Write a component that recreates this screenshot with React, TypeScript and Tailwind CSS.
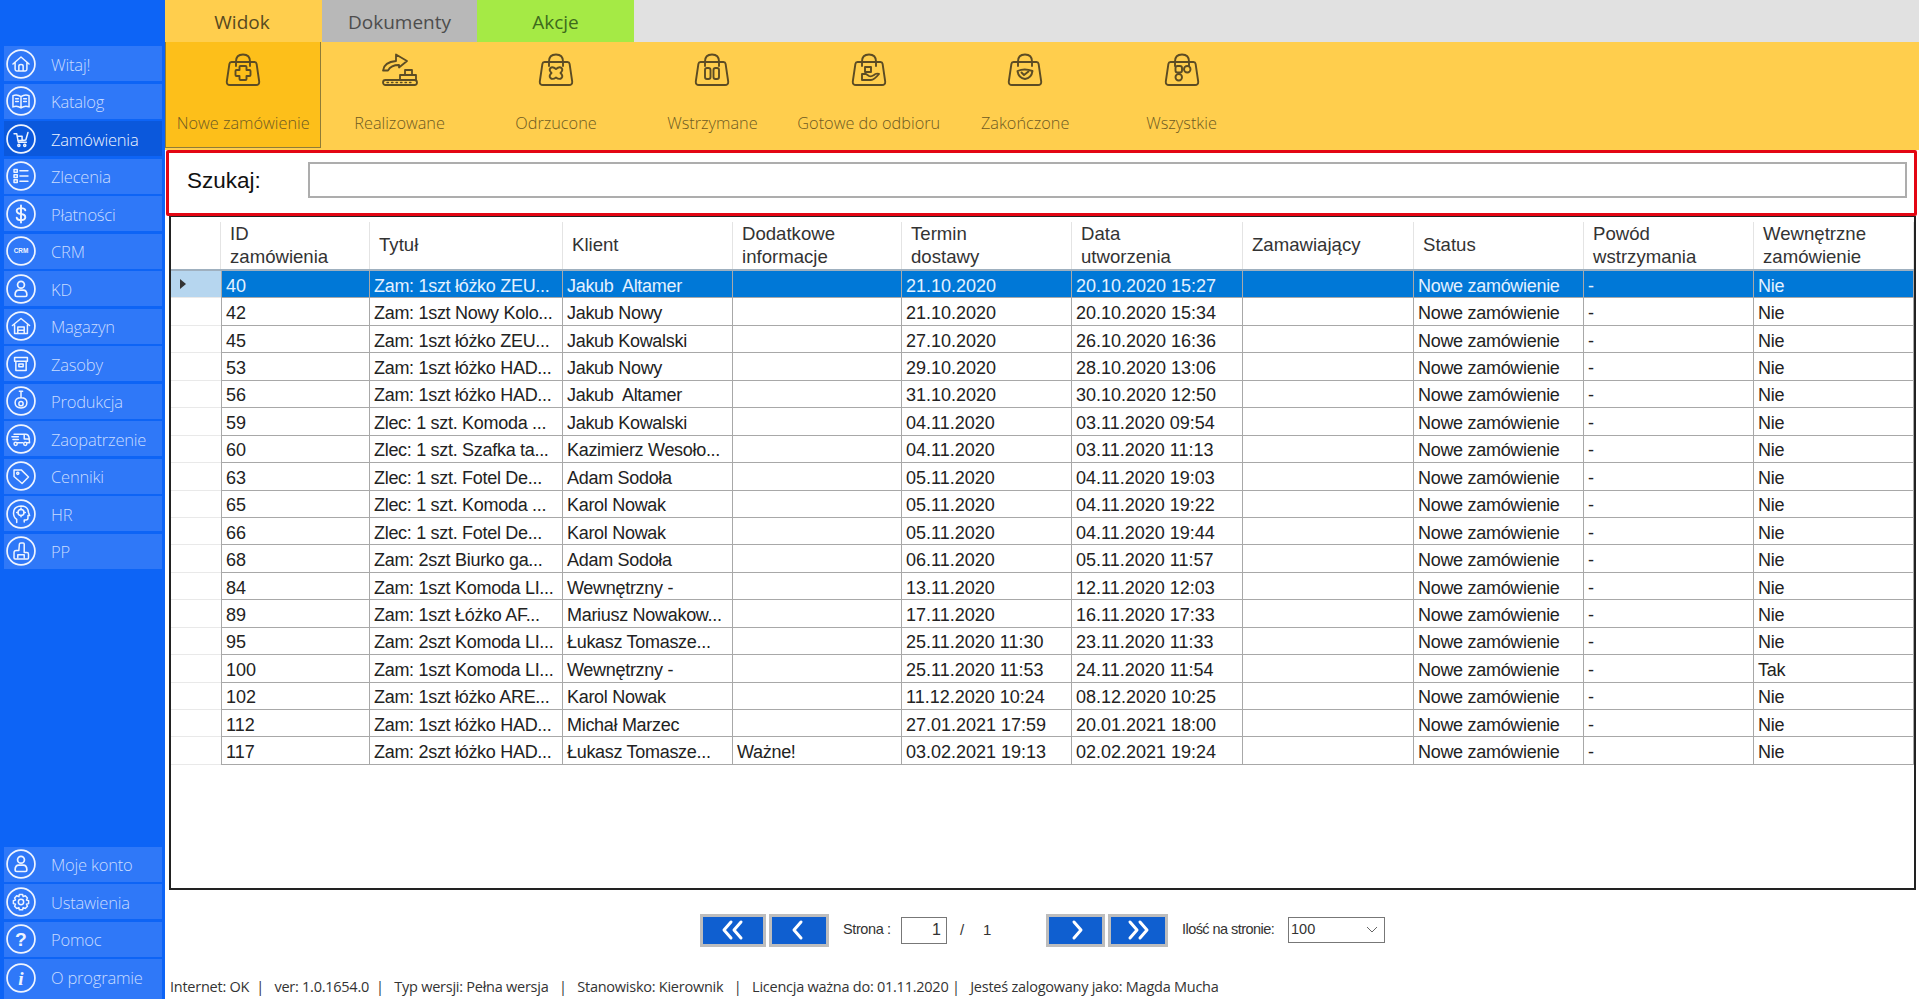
import React from "react";

const S = ({ children }: { children?: React.ReactNode }) => (
  <svg width="30" height="30" viewBox="0 0 28 28" fill="none" stroke="#eef4ff" strokeWidth="1.400" strokeLinecap="round" strokeLinejoin="round" className="shrink-0">
    <circle cx="14" cy="14" r="13" strokeWidth="1.600" />
    {children}
  </svg>
);

const navIcons: Record<string, React.ReactNode> = {
  home: <path d="M6.500 14 14 7.500 21.500 14M8.500 12.500V19q0 1.500 1.500 1.500h8q1.500 0 1.500-1.500v-6.500M12 20.500V16q0-1.500 2-1.500t2 1.500v4.500" />,
  book: <path d="M6.500 9q4-1.500 7.500 1 3.500-2.500 7.500-1v10.500q-4-1.500-7.500 1-3.500-2.500-7.500-1zM14 10v10.500M9 12h2.500M9 14.500h2.500M16.500 12H19M16.500 14.500H19" />,
  cart: <><path d="M7.500 9h2.500l1.500 8h7.500M10.500 11.500h4.500v4h-4M15 15.500l3.500-.5 2-7" /><circle cx="12" cy="20" r="1" /><circle cx="17.500" cy="20" r="1" /></>,
  list: <path d="M7.500 8h3v2.500h-3zM7.500 12.800h3v2.500h-3zM7.500 17.500h3V20h-3zM13 9h7.500M13 14h7.500M13 18.800h7.500" />,
  dollar: <path strokeWidth="1.800" d="M18 10.500Q17.500 8.500 14 8.500 10 8.500 10 11t4 3 4 3-4 2.800q-3.500 0-4-2.300M14 6v16" />,
  crm: <text x="14" y="16.200" textAnchor="middle" fontSize="6" fontWeight="700" fill="#eef4ff" stroke="none" fontFamily="'Liberation Sans',sans-serif">CRM</text>,
  user: <><circle cx="14" cy="10" r="3.200" strokeWidth="1.600" /><path strokeWidth="1.600" d="M8.500 19.500q0-4.500 3.500-4.500h4q3.500 0 3.500 4.500 0 1.500-1.500 1.500h-8q-1.500 0-1.500-1.500z" /></>,
  ware: <path d="M6 13.500 14 7l8 6.500M8 12.500V21h12v-8.500M11 21v-6h6v6M11 18h6" />,
  box: <path d="M8 8h12v3.500H8zM9.200 11.500V20h9.600v-8.500M12 14h4v2.500h-4z" />,
  prod: <><path d="M14 5v6M12.500 5h3M8.500 15.500q0-4.500 5.500-4.500t5.500 4.500q0 5-5.500 5t-5.500-5z" /><circle cx="14" cy="16.500" r="2" /></>,
  truck: <><path d="M10 9.500h8.500q2.500 0 3 3l.5 5h-2M15.500 17.500h-5M5.500 12h6M6.500 14.500h5M7.500 9.500h3M17 9.500v4.500h5" /><circle cx="9" cy="18.500" r="1.500" /><circle cx="18" cy="18.500" r="1.500" /></>,
  tag: <><path d="M7.500 8.500h7l6.500 6.500-6 6-7.500-6.500z" /><circle cx="11" cy="11.500" r="1" /></>,
  hr: <><path d="M10 22v-3q-3-2-3-6 0-6 7-6.500 6.500 0 7 6l1 3h-1.500v2.500q0 1.500-2 1.500H17v2" /><circle cx="14" cy="12.500" r="2.800" /><path d="M14 8.500v1.200M14 15.300v1.200M10 12.500h1.200M16.800 12.500H18" /></>,
  pp: <path d="M7.500 20.500v-5q0-2 2-2h2.500l.5-6q0-1 1.500-1h2q1 0 1 1v8h2.500q1.500 0 1.500 1.500v3.500q0 1-1 1H8.500q-1 0-1-1zM11 20v-2.500h6V20" />,
  gear: <><circle cx="14" cy="14" r="2.500" /><path d="M12.500 7h3l.5 2 2-.8 2 2-.9 1.900 2 .6v2.800l-2 .6.900 1.900-2 2-2-.8-.5 2h-3l-.5-2-2 .8-2-2 .9-1.900-2-.6v-2.800l2-.6-.9-1.900 2-2 2 .8z" /></>,
  help: <text x="14" y="20.500" textAnchor="middle" fontSize="18" fontWeight="700" fill="#eef4ff" stroke="none" fontFamily="'Liberation Sans',sans-serif">?</text>,
  info: <text x="14" y="20.500" textAnchor="middle" fontSize="18" fontWeight="700" fontStyle="italic" fill="#eef4ff" stroke="none" fontFamily="'Liberation Serif',serif">i</text>,
};

const Bag = ({ children }: { children?: React.ReactNode }) => (
  <svg width="36" height="33" viewBox="0 0 36 33" fill="none" stroke="#5c4c24" strokeWidth="1.900" strokeLinecap="round" strokeLinejoin="round">
    <path d="M6.500 9H29.500q1.800 0 2.100 1.800l2.600 17.700q.3 3.500-3.200 3.500H5q-3.500 0-3.200-3.500L4.400 10.800Q4.700 9 6.500 9z" />
    <path d="M11 13V8.500Q11 1.500 18 1.500T25 8.500V13" />
    {children}
  </svg>
);

const toolbar: { label: string; icon: React.ReactNode }[] = [
  { label: "Nowe zamówienie", icon: <Bag><path d="M15.500 13h5q1 0 1 1v3h3q1 0 1 1v4q0 1-1 1h-3v3q0 1-1 1h-5q-1 0-1-1v-3h-3q-1 0-1-1v-4q0-1 1-1h3v-3q0-1 1-1z" /></Bag> },
  {
    label: "Realizowane",
    icon: (
      <svg width="36" height="33" viewBox="0 0 36 33" fill="none" stroke="#5c4c24" strokeWidth="1.800" strokeLinecap="round" strokeLinejoin="round">
        <path d="M1 17.500Q2 9 14 8V1.500L25 8l-8 6.500V12Q9 12 6 17.500z" />
        <path d="M23 22v-5h7v5M18 27v-5h16v5" />
        <rect x="1" y="27" width="34" height="5" rx="2.500" />
        <path strokeWidth="1.300" strokeDasharray="1.500 3" d="M5 29.500h27" />
      </svg>
    ),
  },
  { label: "Odrzucone", icon: <Bag><path d="M12.500 15q2-2 5.500 1 3.500-3 5.500-1t-1 5q3 3 1 5t-5.500-.5q-3.500 2.500-5.500.5t1-5q-3-3-1-5z" /></Bag> },
  { label: "Wstrzymane", icon: <Bag><rect x="11" y="15" width="5.500" height="11" rx="2" /><rect x="19.500" y="15" width="5.500" height="11" rx="2" /></Bag> },
  { label: "Gotowe do odbioru", icon: <Bag><path d="M14 14h6v5h-6zM11 21v6h9q3 0 8-6-3-1-5 1-3 2-5 1l-3-2z" /></Bag> },
  { label: "Zakończone", icon: <Bag><path d="M10.500 18q7-3 15 0-1 7-7.500 8-6.500-1-7.500-8z" /><path d="m14.500 19.500 2.500 2.500 4.500-3.500" /></Bag> },
  { label: "Wszystkie", icon: <Bag><rect x="11.500" y="13" width="6.500" height="6.500" rx="2" /><rect x="20" y="13" width="6.500" height="6.500" rx="3.200" /><rect x="11.500" y="21" width="6.500" height="6.500" rx="3.200" /></Bag> },
];

const top = [["Witaj!", "home"], ["Katalog", "book"], ["Zamówienia", "cart"], ["Zlecenia", "list"], ["Płatności", "dollar"], ["CRM", "crm"], ["KD", "user"], ["Magazyn", "ware"], ["Zasoby", "box"], ["Produkcja", "prod"], ["Zaopatrzenie", "truck"], ["Cenniki", "tag"], ["HR", "hr"], ["PP", "pp"]];
const bottom = [["Moje konto", "user"], ["Ustawienia", "gear"], ["Pomoc", "help"], ["O programie", "info"]];

const rows: string[][] = [
  ["40", "Zam: 1szt łóżko ZEU...", "Jakub  Altamer", "", "21.10.2020", "20.10.2020 15:27", "Nie"],
  ["42", "Zam: 1szt Nowy Kolo...", "Jakub Nowy", "", "21.10.2020", "20.10.2020 15:34", "Nie"],
  ["45", "Zam: 1szt łóżko ZEU...", "Jakub Kowalski", "", "27.10.2020", "26.10.2020 16:36", "Nie"],
  ["53", "Zam: 1szt łóżko HAD...", "Jakub Nowy", "", "29.10.2020", "28.10.2020 13:06", "Nie"],
  ["56", "Zam: 1szt łóżko HAD...", "Jakub  Altamer", "", "31.10.2020", "30.10.2020 12:50", "Nie"],
  ["59", "Zlec: 1 szt. Komoda ...", "Jakub Kowalski", "", "04.11.2020", "03.11.2020 09:54", "Nie"],
  ["60", "Zlec: 1 szt. Szafka ta...", "Kazimierz Wesoło...", "", "04.11.2020", "03.11.2020 11:13", "Nie"],
  ["63", "Zlec: 1 szt. Fotel De...", "Adam Sodoła", "", "05.11.2020", "04.11.2020 19:03", "Nie"],
  ["65", "Zlec: 1 szt. Komoda ...", "Karol Nowak", "", "05.11.2020", "04.11.2020 19:22", "Nie"],
  ["66", "Zlec: 1 szt. Fotel De...", "Karol Nowak", "", "05.11.2020", "04.11.2020 19:44", "Nie"],
  ["68", "Zam: 2szt Biurko ga...", "Adam Sodoła", "", "06.11.2020", "05.11.2020 11:57", "Nie"],
  ["84", "Zam: 1szt Komoda LI...", "Wewnętrzny -", "", "13.11.2020", "12.11.2020 12:03", "Nie"],
  ["89", "Zam: 1szt Łóżko AF...", "Mariusz Nowakow...", "", "17.11.2020", "16.11.2020 17:33", "Nie"],
  ["95", "Zam: 2szt Komoda LI...", "Łukasz Tomasze...", "", "25.11.2020 11:30", "23.11.2020 11:33", "Nie"],
  ["100", "Zam: 1szt Komoda LI...", "Wewnętrzny -", "", "25.11.2020 11:53", "24.11.2020 11:54", "Tak"],
  ["102", "Zam: 1szt łóżko ARE...", "Karol Nowak", "", "11.12.2020 10:24", "08.12.2020 10:25", "Nie"],
  ["112", "Zam: 1szt łóżko HAD...", "Michał Marzec", "", "27.01.2021 17:59", "20.01.2021 18:00", "Nie"],
  ["117", "Zam: 2szt łóżko HAD...", "Łukasz Tomasze...", "Ważne!", "03.02.2021 19:13", "02.02.2021 19:24", "Nie"],
];

const headers = ["ID zamówienia", "Tytuł", "Klient", "Dodatkowe informacje", "Termin dostawy", "Data utworzenia", "Zamawiający", "Status", "Powód wstrzymania", "Wewnętrzne zamówienie"];

const NavItem = ({ label, icon, active, last }: { label: string; icon: string; active?: boolean; last?: boolean }) => (
  <div className={`flex items-center gap-[15px] pl-[2px] ${last ? "h-[40px] pb-[3px]" : "h-[35px] mb-[2.5px]"} ${active ? "bg-[#0b58dc] text-[#f0f5ff]" : "bg-[#2f78f8] text-[#c9dcff]"}`}>
    <S>{navIcons[icon]}</S>
    <span className={`${last ? "pt-[2px]" : "pt-[3px]"} text-[16.5px] font-light leading-none tracking-[-0.2px] whitespace-nowrap`}>{label}</span>
  </div>
);

const Pg = ({ d, w }: { d: string; w: string }) => (
  <div className={`h-[33px] ${w} border-[3px] border-[#bdbdbd] bg-[#0f5fd0] flex items-center justify-center`}>
    <svg width="32" height="22" viewBox="0 0 32 22" fill="none" stroke="#fff" strokeWidth="3" strokeLinecap="round" strokeLinejoin="round"><path d={d} /></svg>
  </div>
);

const grid = "grid grid-cols-[50px_149px_193px_170px_169px_170px_171px_171px_170px_170px_1fr]";
const sans = "font-['Liberation_Sans',Arial,sans-serif]";

export default function App() {
  return (
    <div className="flex h-screen w-full overflow-hidden bg-white font-['Open_Sans',sans-serif]">
      <aside className="flex w-[165px] shrink-0 flex-col justify-between bg-[#0d64f6] pl-[4px] pr-[3px] pt-[46px]">
        <div>
          {top.map(([l, i]) => <NavItem key={l} label={l} icon={i} active={l === "Zamówienia"} />)}
        </div>
        <div>
          {bottom.map(([l, i], n) => <NavItem key={l} label={l} icon={i} last={n === 3} />)}
        </div>
      </aside>

      <main className="flex min-w-0 flex-1 flex-col">
        <div className="flex h-[42px] bg-[#e1e1e1] pt-0 text-[19px] leading-none">
          <div className="flex w-[157px] items-center justify-center bg-[#ffce4d] pt-[2px] pr-[3px] text-[#57491f]">Widok</div>
          <div className="flex w-[155px] items-center justify-center bg-[#b8b8b8] pt-[2px] text-[#4d4d4d]">Dokumenty</div>
          <div className="flex w-[157px] items-center justify-center bg-[#a5ea45] pt-[2px] text-[#3d6a1c]">Akcje</div>
        </div>

        <div className="flex h-[108px] bg-[#ffce4d]">
          {toolbar.map((t, i) => (
            <div key={t.label} className={`flex h-[106px] w-[156.4px] flex-col items-center pt-[11px] ${i === 0 ? "border border-[#8f7b36] border-t-0 bg-[#fdbf1a]" : ""}`}>
              {t.icon}
              <span className="mt-[29px] whitespace-nowrap text-[16.300px] font-light leading-none text-[#6e5a22]">{t.label}</span>
            </div>
          ))}
        </div>

        <div className="ml-[1px] mr-[2px] flex h-[66px] items-center rounded-[2px] border-[3px] border-[#e30613] pb-[6px] pl-[18px] pr-[7px]">
          <span className={`${sans} w-[121px] pt-[3px] text-[22.5px] leading-none text-[#111]`}>Szukaj:</span>
          <div className="h-[36px] flex-1 border-2 border-[#adadad] bg-white" />
        </div>

        <div className={`${sans} ml-[4px] mr-[3px] h-[674px] border-2 border-t border-[#222] text-[18px] text-[#222]`}>
          <div className={`${grid} h-[54px] border-b-2 border-[#9fb0bf] pt-[5px] leading-[22.5px] text-[18.6px] text-[#333]`}>
            <div className="border-r border-[#e4e4e4]" />
            {headers.map((h) => (
              <div key={h} className="flex items-center border-r border-[#e4e4e4] pl-[9px] pr-[40px]">{h}</div>
            ))}
          </div>
          {rows.map((r, n) => {
            const sel = n === 0;
            const cells = [r[0], r[1], r[2], r[3], r[4], r[5], "", "Nowe zamówienie", "-", r[6]];
            return (
              <div key={r[0]} className={`${grid} h-[27.45px] ${sel ? "bg-[#0078d7] text-[#e3f1ff]" : ""}`}>
                <div className={`flex items-center border-b border-[#e9e9e9] pl-[9px] ${sel ? "bg-[#b6d6ef]" : "bg-white"}`}>
                  {sel && <div className="h-0 w-0 border-y-[5px] border-l-[6px] border-y-transparent border-l-[#333]" />}
                </div>
                {cells.map((c, k) => (
                  <div key={k} className={`flex items-center overflow-hidden whitespace-pre border-b border-r border-[#a8a8a8] pl-[4px] pt-[3px] leading-none ${k === 0 ? "border-l" : ""} ${k === 4 || k === 5 || k === 0 ? "" : "tracking-[-0.3px]"}`}>{c}</div>
                ))}
              </div>
            );
          })}
        </div>

        <div className={`${sans} flex h-[80px] items-center pl-[535px] text-[#333]`}>
          <div className="flex gap-[3px]">
            <Pg w="w-[66px]" d="M14 3 7 11l7 8M24 3l-7 8 7 8" />
            <Pg w="w-[60px]" d="M18 3l-7 8 7 8" />
          </div>
          <span className="ml-[14px] w-[58px] text-[14.5px] tracking-[-0.4px]">Strona :</span>
          <div className="flex h-[27px] w-[46px] items-center justify-end border border-[#777] pr-[5px] text-[16px]">1</div>
          <span className="ml-[13px] w-[23px] text-[15px]">/</span>
          <span className="w-[63px] text-[15px]">1</span>
          <div className="flex gap-[3px]">
            <Pg w="w-[59px]" d="M14 3l7 8-7 8" />
            <Pg w="w-[60px]" d="M8 3l7 8-7 8M18 3l7 8-7 8" />
          </div>
          <span className="ml-[14px] w-[106px] whitespace-nowrap text-[14.500px] tracking-[-0.55px]">Ilość na stronie:</span>
          <div className="flex h-[26px] w-[97px] items-center justify-between border border-[#777] pl-[2px] pr-[6px] text-[14.5px]">
            100
            <svg width="12" height="8" viewBox="0 0 12 8" fill="none" stroke="#666" strokeWidth="1"><path d="m1 1 5 5 5-5" /></svg>
          </div>
        </div>

        <div className="flex flex-1 items-start whitespace-pre pl-[5px] pt-[10px] text-[14.5px] leading-none tracking-[-0.25px] text-[#333]">
          Internet: OK  |   ver: 1.0.1654.0  |   Typ wersji: Pełna wersja   |   Stanowisko: Kierownik   |   Licencja ważna do: 01.11.2020 |   Jesteś zalogowany jako: Magda Mucha
        </div>
      </main>
    </div>
  );
}
